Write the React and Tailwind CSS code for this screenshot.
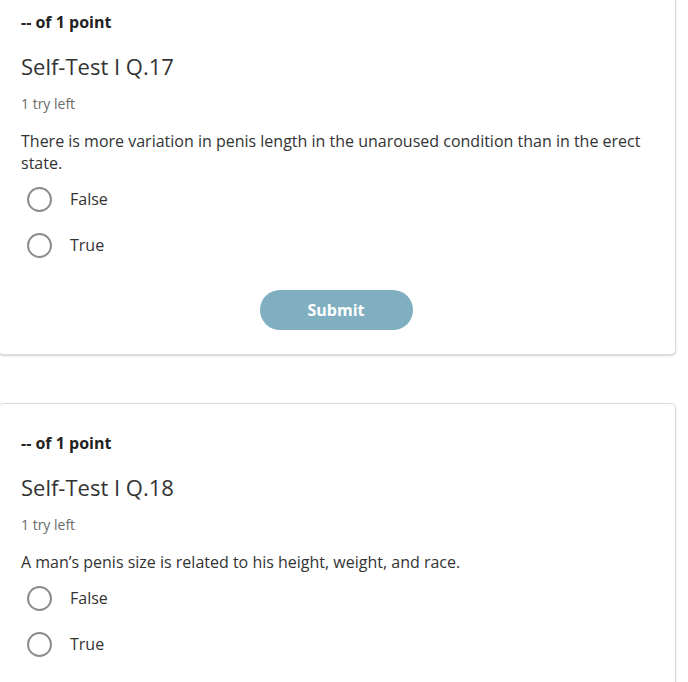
const questions = [
  {
    id: 17,
    text: "There is more variation in penis length in the unaroused condition than in the erect state.",
    showSubmit: true,
  },
  {
    id: 18,
    text: "A man’s penis size is related to his height, weight, and race.",
    showSubmit: false,
  },
];

const Radio = ({ label }) => (
  <label className="flex h-[46px] items-center">
    <span className="ml-[6px] h-[25px] w-[25px] rounded-full border-2 border-[#8c8c8c] bg-white" />
    <span className="ml-[18px] text-[16px] leading-[22px] text-[#333]">{label}</span>
  </label>
);

const QuestionCard = ({ q }) => (
  <div className="rounded-[5px] border border-[#dcdcdc] bg-white pb-[24px] pl-[22px] pr-[24px] pt-[27px] shadow-[0_1px_2px_rgba(0,0,0,0.18)]">
    <p className="text-[16px] font-bold leading-[24px] text-[#222]">-- of 1 point</p>
    <h2 className="mt-[17px] text-[22px] leading-[30px] text-[#333]">Self-Test I Q.{q.id}</h2>
    <p className="mt-[13px] text-[14px] leading-[20px] text-[#6b6b6b]">1 try left</p>
    <p className="mt-[16px] text-[16px] leading-[22px] text-[#333]">{q.text}</p>
    <div className="mt-[2px] flex flex-col">
      <Radio label="False" />
      <Radio label="True" />
    </div>
    {q.showSubmit && (
      <div className="mt-[22px] flex justify-center">
        <button className="h-[40px] w-[153px] rounded-full bg-[#7fafc1] text-[16px] font-bold text-white">
          Submit
        </button>
      </div>
    )}
  </div>
);

export default function App() {
  return (
    <div
      className="h-[682px] w-[688px] overflow-hidden bg-white"
      style={{ fontFamily: '"Open Sans", "Liberation Sans", sans-serif' }}
    >
      <div className="-ml-[2px] -mt-[18px] flex w-[678px] flex-col gap-[48px]">
        {questions.map((q) => (
          <QuestionCard key={q.id} q={q} />
        ))}
      </div>
    </div>
  );
}
